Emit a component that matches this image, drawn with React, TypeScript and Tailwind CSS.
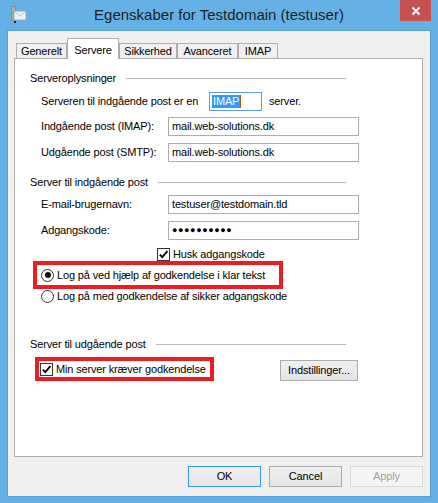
import type { ReactNode } from "react"

const font = "font-['Liberation_Sans',Arial,sans-serif]"

function CheckBox() {
  return (
    <span className="w-[13px] h-[13px] border border-[#333333] bg-white flex items-center justify-center shrink-0">
      <svg width="11" height="11" viewBox="0 0 11 11">
        <path d="M1.8 5.6 L4.3 8.2 L9.4 2.2" fill="none" stroke="#000" strokeWidth="1.9" />
      </svg>
    </span>
  )
}

function Radio({ checked }: { checked?: boolean }) {
  return (
    <span className="w-[13px] h-[13px] rounded-full border border-[#333333] bg-white flex items-center justify-center shrink-0">
      {checked && <span className="w-[6px] h-[6px] rounded-full bg-[#111]" />}
    </span>
  )
}

function GroupHeader({ label, className }: { label: string; className: string }) {
  return (
    <div className={`flex items-center h-[16px] ml-[15px] w-[316px] ${className}`}>
      <span>{label}</span>
      <div className="flex-1 h-px bg-[#b9b9b9] ml-[10px]" />
    </div>
  )
}

function Field({ label, value, className }: { label: string; value: ReactNode; className: string }) {
  return (
    <div className={`flex items-center h-[19px] ml-[26px] ${className}`}>
      <span className="w-[127px]">{label}</span>
      <div className="w-[191px] h-[19px] border border-[#abadb3] bg-white flex items-center pl-[3px]">{value}</div>
    </div>
  )
}

const tabs = [
  { name: "Generelt", w: "w-[51px]" },
  { name: "Servere", w: "w-[52px]", active: true },
  { name: "Sikkerhed", w: "w-[58px]" },
  { name: "Avanceret", w: "w-[61px]" },
  { name: "IMAP", w: "w-[40px]" },
]

export default function App() {
  return (
    <div className={`w-[438px] h-[503px] bg-[#63b1e6] flex flex-col text-[11px] tracking-[-0.15px] text-black whitespace-nowrap ${font}`}>
      {/* title bar */}
      <div className="h-[30px] grid grid-cols-[1fr_auto_1fr]">
        <div className="pl-[10px] pt-[6px]">
          <svg width="17" height="17" viewBox="0 0 17 17">
            <rect x="1" y="0" width="5" height="15" fill="#8a8f96" />
            <rect x="2" y="1" width="3" height="13" fill="#a9aeb4" />
            <rect x="2" y="6" width="3" height="1" fill="#3fbf3f" />
            <rect x="4" y="5" width="12" height="9" fill="#eef0f2" stroke="#9aa0a6" strokeWidth="0.8" />
            <path d="M4.5 5.5 L10 10 L15.5 5.5" fill="none" stroke="#b5bac0" strokeWidth="0.8" />
            <rect x="4" y="15" width="2" height="2" fill="#222" />
          </svg>
        </div>
        <div className="pt-[5px] text-[15px] tracking-normal text-[#1e1e1e] leading-[20px]">
          Egenskaber for Testdomain (testuser)
        </div>
        <div className="flex justify-end pr-[7px]">
          <div className="w-[31px] h-[21px] bg-[#c75050] flex items-center justify-center">
            <svg width="10" height="10" viewBox="0 0 10 10">
              <path d="M1.5 1.5 L8.5 8.5 M8.5 1.5 L1.5 8.5" stroke="#fff" strokeWidth="2" />
            </svg>
          </div>
        </div>
      </div>

      {/* client */}
      <div className="ml-[7px] w-[424px] h-[467px] border border-[#5a9fd4] bg-[#f0f0f0] flex flex-col pt-[7px]">
        <div className="ml-[8px] h-[20px] flex items-end">
          {tabs.map((t) =>
            t.active ? (
              <div
                key={t.name}
                className={`${t.w} h-[21px] -mb-px relative z-10 bg-white border border-b-0 border-[#adadad] flex justify-center pt-[3px]`}
              >
                {t.name}
              </div>
            ) : (
              <div
                key={t.name}
                className={`${t.w} h-[15px] bg-[#f0f0f0] border border-b-0 border-[#adadad] flex justify-center pt-px leading-[12px]`}
              >
                {t.name}
              </div>
            )
          )}
        </div>

        <div className="ml-[6px] w-[409px] h-[399px] border border-[#adadad] bg-white flex flex-col">
          <GroupHeader label="Serveroplysninger" className="mt-[11px]" />

          <div className="flex items-center h-[19px] ml-[26px] mt-[6px]">
            <span className="w-[168px]">Serveren til indgående post er en</span>
            <div className="w-[53px] h-[19px] border border-[#569de5] bg-white flex items-center pl-[2px]">
              <span className="bg-[#3399ff] text-white px-px leading-[13px]">IMAP</span>
              <span className="w-px h-[13px] bg-[#b35b1e]" />
            </div>
            <span className="ml-[7px]">server.</span>
          </div>

          <Field label="Indgående post (IMAP):" value="mail.web-solutions.dk" className="mt-[6px]" />
          <Field label="Udgående post (SMTP):" value="mail.web-solutions.dk" className="mt-[7px]" />

          <GroupHeader label="Server til indgående post" className="mt-[12px]" />

          <Field label="E-mail-brugernavn:" value="testuser@testdomain.tld" className="mt-[5px]" />
          <Field
            label="Adgangskode:"
            value={<span className="text-[9px] tracking-[0.6px]">●●●●●●●●●●</span>}
            className="mt-[7px]"
          />

          <div className="flex items-center h-[13px] mt-[8px] ml-[142px]">
            <CheckBox />
            <span className="ml-[3px]">Husk adgangskode</span>
          </div>

          <div className="ml-[18px] w-[250px] h-[28px] border-4 border-[#ed1c24] flex items-center pl-[4px]">
            <Radio checked />
            <span className="ml-[3px]">Log på ved hjælp af godkendelse i klar tekst</span>
          </div>

          <div className="flex items-center h-[13px] mt-px ml-[26px]">
            <Radio />
            <span className="ml-[3px]">Log på med godkendelse af sikker adgangskode</span>
          </div>

          <GroupHeader label="Server til udgående post" className="mt-[33px]" />

          <div className="flex items-end h-[24px] mt-[5px] ml-[20px]">
            <div className="w-[179px] h-[24px] border-4 border-[#ed1c24] flex items-center pl-px">
              <CheckBox />
              <span className="ml-[3px]">Min server kræver godkendelse</span>
            </div>
            <button className="ml-[66px] w-[78px] h-[21px] border border-[#acacac] bg-gradient-to-b from-[#f0f0f0] to-[#e5e5e5] flex items-center justify-center">
              Indstillinger...
            </button>
          </div>
        </div>

        <div className="ml-[6px] w-[409px] mt-[9px] flex justify-end gap-[8px]">
          <button className="w-[73px] h-[21px] border border-[#3399ff] bg-gradient-to-b from-[#f0f0f0] to-[#e5e5e5] flex items-center justify-center">
            OK
          </button>
          <button className="w-[73px] h-[21px] border border-[#acacac] bg-gradient-to-b from-[#f0f0f0] to-[#e5e5e5] flex items-center justify-center">
            Cancel
          </button>
          <button className="w-[73px] h-[21px] border border-[#d9d9d9] bg-[#f4f4f4] text-[#a0a0a0] flex items-center justify-center">
            Apply
          </button>
        </div>
      </div>
    </div>
  )
}
